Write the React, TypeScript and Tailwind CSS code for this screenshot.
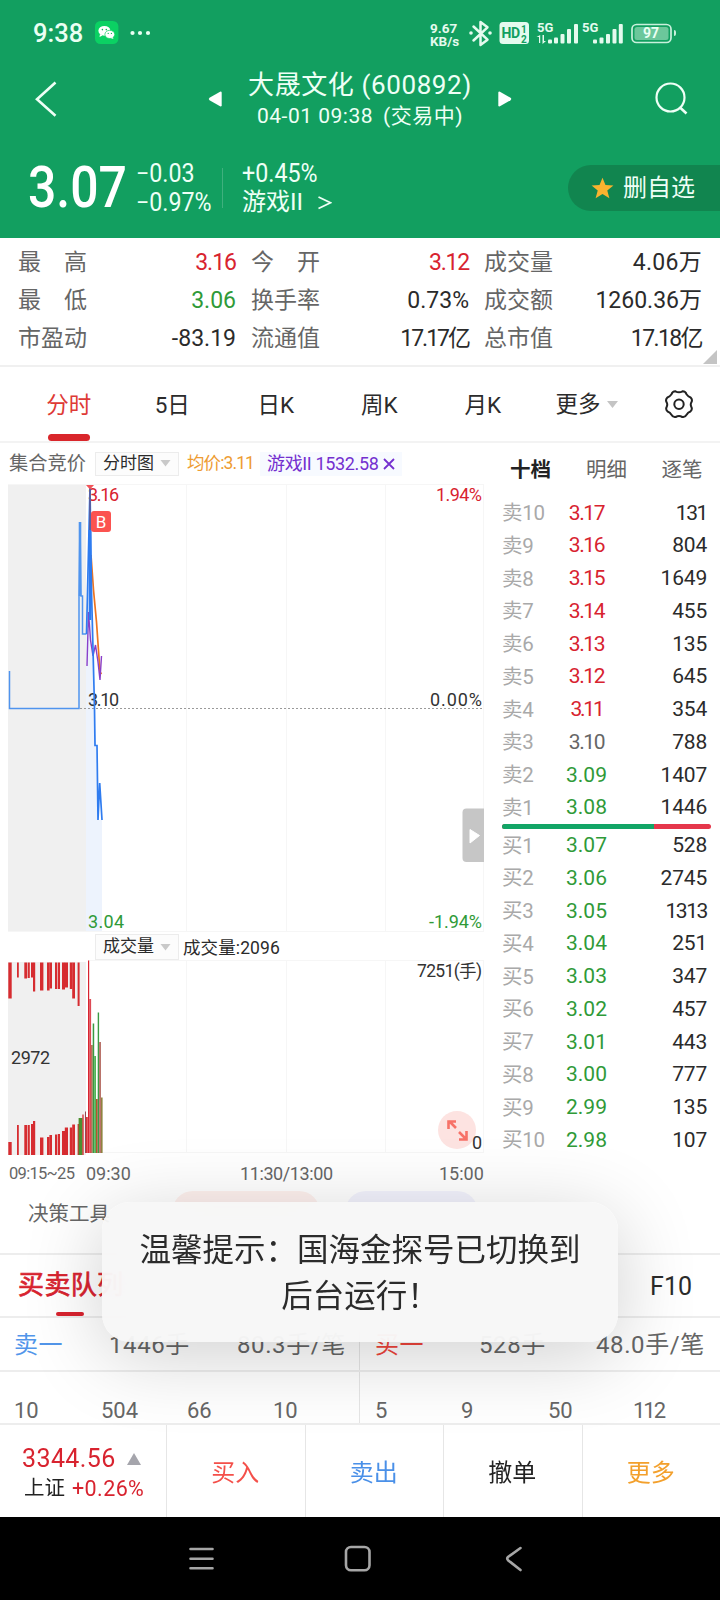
import React from 'react';
import clsx from 'clsx';

const red = 'text-[#d8232f]';
const green = 'text-[#2f9a38]';
const dark = 'text-[#2b2b2b]';

const stats = [
  [
    { label: '最　高', value: '3.16', color: `${red} tracking-[-1px]` },
    { label: '今　开', value: '3.12', color: `${red} tracking-[-1.2px]` },
    { label: '成交量', value: '4.06万', color: `${dark} tracking-[0.3px]` },
  ],
  [
    { label: '最　低', value: '3.06', color: green },
    { label: '换手率', value: '0.73%', color: dark },
    { label: '成交额', value: '1260.36万', color: dark },
  ],
  [
    { label: '市盈动', value: '-83.19', color: dark },
    { label: '流通值', value: '17.17亿', color: `${dark} tracking-[-2px]` },
    { label: '总市值', value: '17.18亿', color: `${dark} tracking-[-1.6px]` },
  ],
];

const periods = ['分时', '5日', '日K', '周K', '月K'];

const asks = [
  ['卖10', '3.17', '131'],
  ['卖9', '3.16', '804'],
  ['卖8', '3.15', '1649'],
  ['卖7', '3.14', '455'],
  ['卖6', '3.13', '135'],
  ['卖5', '3.12', '645'],
  ['卖4', '3.11', '354'],
  ['卖3', '3.10', '788'],
  ['卖2', '3.09', '1407'],
  ['卖1', '3.08', '1446'],
];

const bids = [
  ['买1', '3.07', '528'],
  ['买2', '3.06', '2745'],
  ['买3', '3.05', '1313'],
  ['买4', '3.04', '251'],
  ['买5', '3.03', '347'],
  ['买6', '3.02', '457'],
  ['买7', '3.01', '443'],
  ['买8', '3.00', '777'],
  ['买9', '2.99', '135'],
  ['买10', '2.98', '107'],
];

// auction bars: x, width, depth of the upper bar, height of the lower bar
const auctionBars = [
  [8.3, 3.4, 36, 13],
  [17, 1.8, 15, 30],
  [24.3, 2.7, 16, 30],
  [27.6, 2.2, 15.5, 30],
  [31, 2.2, 15, 31],
  [33, 2.2, 29, 34],
  [40, 3.4, 28, 17.5],
  [47, 2.6, 28, 18],
  [49.4, 2.6, 26, 20],
  [55, 2.2, 26.5, 20.5],
  [57.8, 2.2, 26.5, 21],
  [62, 3, 27, 24],
  [64.8, 3.2, 25, 27.5],
  [69.8, 2.5, 26.5, 27.5],
  [72.2, 2.8, 36, 30.5],
  [77.6, 2, 43.5, 31],
];

// minute bars: x, width, top, colour
const minuteBars: [number, number, number, string][] = [
  [78.6, 4, 1118, '#4a8f2f'],
  [82.3, 1.4, 1114.5, '#d8353a'],
  [85, 0.9, 1111.5, '#8d3440'],
  [86, 1.8, 1117, '#d8353a'],
  [88, 1.2, 960.5, '#d8232f'],
  [89.2, 1.9, 999, '#dd4a55'],
  [91.1, 1.6, 1045, '#b0694b'],
  [92.7, 1.5, 1023.5, '#3a9a42'],
  [94.2, 1.8, 1056, '#53b457'],
  [96, 1.7, 1099, '#b5512f'],
  [97.7, 1.4, 1012.5, '#3a9a42'],
  [99.1, 1.9, 1042, '#b9736a'],
  [101, 1.6, 1097.5, '#8f8340'],
];

const priceColor = (price: string) => {
  if (price === '3.10') return 'text-[#666]';
  return Number(price) > 3.1 ? red : green;
};

const StatusBar: React.FC = () => (
  <div className="flex h-[66px] items-center pl-[33px]">
    <span className="w-[62px] text-[25.5px] font-medium text-[#eafff3]">9:38</span>
    <svg width="24" height="24" viewBox="0 0 24 24">
      <rect width="23.4" height="23" rx="5.5" fill="#0bd163" />
      <ellipse cx="9.4" cy="9.8" rx="6" ry="4.9" fill="#fff" />
      <path d="M5 13l-.5 3 3-1.6z" fill="#fff" />
      <ellipse cx="14.8" cy="13.4" rx="4.9" ry="4.1" fill="#fff" stroke="#0bd163" strokeWidth=".7" />
      <path d="M17.5 16l1 2-2.8-.9z" fill="#fff" />
      <g fill="#0bb556">
        <circle cx="7.4" cy="8.6" r=".8" />
        <circle cx="11.3" cy="8.6" r=".8" />
        <circle cx="13.2" cy="12.4" r=".6" />
        <circle cx="16.4" cy="12.4" r=".6" />
      </g>
    </svg>
    <svg className="ml-[11px]" width="22" height="6" viewBox="0 0 22 6" fill="#eafff3">
      <circle cx="2.5" cy="3" r="2.1" />
      <circle cx="10" cy="3" r="2.1" />
      <circle cx="18" cy="3" r="2.1" />
    </svg>
    <div className="ml-[278px] w-[38px] pt-[3px] text-[13.5px] leading-[13px] font-bold whitespace-nowrap text-[#e4faee]">
      <div>9.67</div>
      <div>KB/s</div>
    </div>
    <svg className="-ml-[1px]" width="205" height="28" viewBox="466 19 205 28" fill="none">
      <g stroke="#e4faee" strokeWidth="2.5" strokeLinejoin="round" strokeLinecap="round">
        <path d="M472.5 26.5l14 13.200-7 5.300v-23l7 5.300-14 13.200" />
      </g>
      <circle cx="470" cy="33" r="1.8" fill="#e4faee" />
      <circle cx="489" cy="33" r="1.8" fill="#e4faee" />
      <rect x="498.5" y="22" width="29.5" height="22" rx="3.5" fill="#e4faee" />
      <g fontFamily="Roboto, sans-serif" fontWeight="700">
        <text x="500.5" y="38.2" fontSize="14" fill="#129f60" textLength="18.5">HD</text>
        <text x="520" y="32.5" fontSize="10" fill="#129f60">1</text>
        <text x="520" y="42.5" fontSize="10" fill="#129f60">2</text>
        <text x="536" y="32" fontSize="13" fill="#e4faee">5G</text>
        <text x="581" y="32" fontSize="13" fill="#e4faee">5G</text>
      </g>
      <g fill="#e4faee">
        <path d="M538 43v-6h-2.500l3.700-2v8zM541.500 35h1.500v6h2l-3.500 3z" />
        <rect x="547" y="39.5" width="4" height="4" rx="1" />
        <rect x="553" y="37.5" width="4" height="6" rx="1" />
        <rect x="559.5" y="34" width="4" height="9.500" rx="1" />
        <rect x="566" y="29" width="4" height="14.500" rx="1" />
        <rect x="573" y="24" width="4" height="19.500" rx="1" />
        <rect x="592" y="39.5" width="4" height="4" rx="1" />
        <rect x="598.5" y="37.5" width="4" height="6" rx="1" />
        <rect x="605" y="34" width="4" height="9.500" rx="1" />
        <rect x="611.5" y="29" width="4" height="14.500" rx="1" />
        <rect x="617.8" y="24" width="4" height="19.500" rx="1" />
      </g>
      <rect x="631" y="24.5" width="39" height="18" rx="4.500" stroke="#c9f0dc" strokeWidth="1.700" />
      <rect x="633.5" y="27" width="34" height="13" rx="2.500" fill="#6cc79b" />
      <text x="650" y="38.2" textAnchor="middle" fontFamily="Roboto, sans-serif" fontWeight="700" fontSize="14" fill="#eafff3">97</text>
    </svg>
    <span className="ml-[1.5px] h-1.5 w-[2.5px] rounded-r bg-[#c9f0dc]" />
  </div>
);

const Header: React.FC = () => (
  <header className="h-[238px] bg-[#129f60] text-[#eefff6]">
    <StatusBar />
    <div className="flex h-[66px] items-center">
      <svg className="ml-[34px]" width="24" height="36" viewBox="0 0 24 36" fill="none" stroke="#eefff6" strokeWidth="2.600">
        <path d="M21.500 1.500L3 18.200l18.500 16.500" />
      </svg>
      <svg className="ml-[150px]" width="14" height="16" viewBox="0 0 14 16" fill="#fff">
        <path d="M12.500.5L1.500 6.800q-1.500 1.200 0 2.400l11 6.300q1.200 0 1.200-1.200V1.700Q13.700.5 12.500.5z" />
      </svg>
      <div className="w-[276px] text-center">
        <div className="mt-[1px] text-[26px] leading-[32px] tracking-[0.6px]">大晟文化 (600892)</div>
        <div className="flex justify-center gap-[10px] text-[21px] leading-[30px] tracking-[0.5px]">
          <span>04-01 09:38</span>
          <span>(交易中)</span>
        </div>
      </div>
      <svg width="14" height="16" viewBox="0 0 14 16" fill="#fff">
        <path d="M1.500.5l11 6.300q1.500 1.200 0 2.400l-11 6.300Q.3 15.500.3 14.300V1.700Q.3.5 1.500.5z" />
      </svg>
      <svg className="ml-[142px]" width="36" height="36" viewBox="0 0 36 36" fill="none" stroke="#eefff6" strokeWidth="2.200">
        <circle cx="16.500" cy="16.500" r="14" />
        <path d="M26 26.500l6.500 6" strokeWidth="2.600" />
      </svg>
    </div>
    <div className="flex h-[106px]">
      <div className="w-[136px] pt-[30px] pl-[28px]">
        <span className="inline-block origin-left scale-x-[0.86] text-[58px] leading-[51px] font-medium text-white">3.07</span>
      </div>
      <div className="w-[86px] pt-[27px]">
        <div className="w-[68px] origin-left scale-x-[0.93] text-[25px] leading-[29px] whitespace-nowrap">−0.03</div>
        <div className="w-[82px] origin-left scale-x-[0.93] text-[25px] leading-[29px] whitespace-nowrap">−0.97%</div>
      </div>
      <div className="mt-[36px] h-[40px] w-px bg-[#3fb07e]" />
      <div className="w-[345px] pt-[27px] pl-[19px]">
        <div className="origin-left scale-x-[0.93] text-[25px] leading-[29px]">+0.45%</div>
        <div className="flex text-[24px] leading-[29px]">
          <span>游戏II</span>
          <svg className="mt-[8px] ml-[15px]" width="14" height="14" viewBox="0 0 14 14" fill="none" stroke="#eefff6" strokeWidth="1.800">
            <path d="M.5 1l12 5.800L.5 12.500" />
          </svg>
        </div>
      </div>
      <div className="mt-[33px] flex h-[46px] flex-1 items-center rounded-l-full bg-[#11854f] pl-[23px]">
        <svg width="23" height="22" viewBox="0 0 24 23">
          <path d="M12 .8l3.100 7.600 8.300.5-6.400 5.200 2.200 8L12 17.700l-7.200 4.400 2.200-8L.6 8.900l8.300-.5z" fill="#f9b32f" />
        </svg>
        <span className="ml-[9px] text-[24px]">删自选</span>
      </div>
    </div>
  </header>
);

const StatsGrid: React.FC = () => (
  <section className="relative h-[129px] border-b-2 border-[#f0f0f0] pt-[6px] pl-[18px]">
    {stats.map((row, i) => (
      <div key={i} className="flex h-[38px] items-center text-[23px] text-[#666]">
        {row.map((cell) => (
          <div key={cell.label} className="mr-[15px] flex w-[218px] justify-between">
            <span>{cell.label}</span>
            <span className={cell.color}>{cell.value}</span>
          </div>
        ))}
      </div>
    ))}
    <svg className="absolute right-[3px] bottom-[1px]" width="14" height="14" viewBox="0 0 13 13">
      <path d="M13 0v13H0z" fill="#c4c4c4" />
    </svg>
  </section>
);

const PeriodTabs: React.FC = () => (
  <nav className="flex h-[76px] items-stretch border-b-2 border-[#f3f3f3] pl-[17px] text-[22.5px] text-[#2b2b2b]">
    {periods.map((name, i) => (
      <div key={name} className={clsx('flex w-[103.5px] flex-col items-center', i === 0 && 'text-[#de3a36]')}>
        <span className="mt-[18px] leading-[40px]">{name}</span>
        {i === 0 && <span className="mt-[9px] h-[7px] w-[42px] rounded-full bg-[#d9262b]" />}
      </div>
    ))}
    <div className="ml-[21px] flex h-[75px] items-center">
      更多
      <svg className="ml-[6px]" width="11" height="8" viewBox="0 0 11 8">
        <path d="M0 0h11L5.500 7z" fill="#c4c4c4" />
      </svg>
    </div>
    <svg className="mt-[22px] ml-[46px]" width="30" height="30" viewBox="0 0 30 30" fill="none" stroke="#222" strokeWidth="2">
      <path d="M11.500 2.300Q15 4.300 18.500 2.300Q21.500 2.200 22.500 5.300Q24 7.500 26.600 8.500Q29 11 27.200 13.600Q26.300 15.500 27.200 17.500Q28.800 20.500 26.400 22.500Q23.800 23.300 22.600 25.700Q21.300 28.600 18.300 28Q15 26.200 11.700 28Q8.700 28.600 7.400 25.700Q6.200 23.300 3.600 22.500Q1.200 20.500 2.800 17.500Q3.700 15.500 2.800 13.600Q1 11 3.400 8.500Q6 7.500 7.500 5.300Q8.500 2.200 11.500 2.300z" />
      <circle cx="15" cy="15.200" r="4.700" />
    </svg>
  </nav>
);

const Dropdown: React.FC<{ label: string }> = ({ label }) => (
  <div className="flex h-full w-[84px] items-center border border-[#ececec] bg-[#fcfcfc] pl-[7px] text-[17px] text-[#2b2b2b]">
    {label}
    <svg className="ml-[6px]" width="11" height="7" viewBox="0 0 10 7">
      <path d="M0 0h10L5 6.500z" fill="#c9c9c9" />
    </svg>
  </div>
);

const PriceChart: React.FC = () => (
  <svg className="block" width="484" height="448" viewBox="0 484 484 448" fill="none">
    <rect x="8" y="484" width="78" height="448" fill="#f0f0f0" />
    <path d="M86 634L90 500L94 708L96 745L98 820H102V932H86z" fill="#edf3fd" />
    <g stroke="#f6f6f6">
      <path d="M8 484.500H484M8 931.500H484M186.500 484V932M286.500 484V932M385.500 484V932M483.500 484V932" />
    </g>
    <path d="M80 708.500H484" stroke="#9a9a9a" strokeDasharray="2 2" />
    <g fontFamily="Roboto, 'Noto Sans CJK SC', sans-serif" fontSize="18">
      <text x="88" y="501" fill="#d8232f" textLength="31">3.16</text>
      <text x="88" y="706" fill="#333" textLength="31">3.10</text>
      <text x="88" y="928" fill="#2f9a38" textLength="36">3.04</text>
      <text x="482" y="501" textAnchor="end" fill="#d8232f" textLength="46">1.94%</text>
      <text x="482" y="706" textAnchor="end" fill="#333" textLength="52">0.00%</text>
      <text x="482" y="928" textAnchor="end" fill="#2f9a38" textLength="53">-1.94%</text>
    </g>
    <path d="M91 555L93.500 590L96.500 622L100 672L101.500 674" stroke="#ee7420" strokeWidth="1.700" />
    <path d="M87 666L88.500 612L90.500 640L93 656L95.500 645L98 662L100 680L101.500 656" stroke="#8a3fc8" strokeWidth="1.400" />
    <path d="M9.500 671V708.500H79V596L80 522L81 596H82.500V634H86.500" stroke="#4f94ee" strokeWidth="1.500" />
    <path d="M80 522V596" stroke="#4f94ee" strokeWidth="2.600" />
    <path d="M86.500 634L90 487L91.500 590L94.500 708L95 745.500H97L98 820L99.700 783L102 820" stroke="#2f7cf0" strokeWidth="1.700" />
    <path d="M90 487V560" stroke="#5b5e9c" strokeWidth="1.800" />
    <path d="M90 530V620" stroke="#2f7cf0" strokeWidth="2.600" />
    <path d="M86 485H94L90 489.500z" fill="#f2555a" />
    <rect x="91" y="511" width="20" height="21" rx="3" fill="#fb5350" />
    <text x="101" y="527.500" textAnchor="middle" fontFamily="Roboto, sans-serif" fontSize="17" fill="#fff">B</text>
    <path d="M484 808.500H466.500q-4 0-4 4V858q0 4 4 4H484z" fill="#c6c6c6" />
    <path d="M470 829.500l9.500 6-9.500 7.500z" fill="#fff" stroke="#fff" strokeLinejoin="round" />
  </svg>
);

const VolumeChart: React.FC = () => (
  <svg className="block" width="484" height="196" viewBox="0 960 484 196" fill="none">
    <rect x="8" y="962" width="78" height="193" fill="#f0f0f0" />
    <path d="M88 960.500H484M88 1152.500H484M186.500 960V1152M286.500 960V1152M385.500 960V1152M483.500 960V1152" stroke="#f6f6f6" />
    {auctionBars.map(([x, w, up, low]) => (
      <g key={x} fill="#d62c30">
        <rect x={x} y={962.5} width={w} height={up} />
        <rect x={x} y={1155 - low} width={w} height={low} />
      </g>
    ))}
    {minuteBars.map(([x, w, top, fill]) => (
      <rect key={x} x={x} y={top} width={w} height={(x < 85 ? 1155 : 1153) - top} fill={fill} />
    ))}
    <circle cx="457" cy="1130" r="19" fill="#fde3e1" />
    <g stroke="#f77268" strokeWidth="2.600">
      <path d="M456 1128l-7-7M448.500 1129v-7.500h7.500M459 1132l7 7M466.500 1131v8.500H459" />
    </g>
    <g fontFamily="Roboto, 'Noto Sans CJK SC', sans-serif" fontSize="18" fill="#333">
      <text x="11" y="1063.500" textLength="39">2972</text>
      <text x="482" y="977" textAnchor="end" fontSize="17.500" textLength="65">7251(手)</text>
      <text x="482" y="1148.500" textAnchor="end">0</text>
    </g>
  </svg>
);

const OrderRow: React.FC<{ row: string[] }> = ({ row: [label, price, volume] }) => (
  <div className="flex h-[32.75px] items-center pt-[2px] text-[21px]">
    <span className="w-[50px] text-[20.5px] tracking-[-0.3px] text-[#a9a9a9]">{label}</span>
    <span className={clsx('w-[69px] text-center', priceColor(price), price === '3.11' ? 'tracking-[-2.2px]' : price.startsWith('3.1') && 'tracking-[-1.4px]')}>
      {price}
    </span>
    <span className={clsx('flex-1 text-right text-[#2b2b2b]', /1.*1/.test(volume) ? 'tracking-[-1.4px]' : 'tracking-[-0.2px]')}>{volume}</span>
  </div>
);

const OrderBook: React.FC = () => (
  <aside className="w-[218px] pr-[13px]">
    <div className="flex h-[53px] items-center pt-[2px] pl-[8px] text-[20.5px] text-[#666]">
      <span className="w-[76px] font-bold text-[#222]">十档</span>
      <span className="w-[75.5px]">明细</span>
      <span>逐笔</span>
    </div>
    {asks.map((row) => (
      <OrderRow key={row[0]} row={row} />
    ))}
    <div className="-mr-1 flex h-[5px] overflow-hidden rounded-full bg-[#e5374b]">
      <span className="w-[152px] bg-[#12a566]" />
    </div>
    {bids.map((row) => (
      <OrderRow key={row[0]} row={row} />
    ))}
  </aside>
);

const ChartPanel: React.FC = () => (
  <section className="flex h-[748px]">
    <div className="w-[502px]">
      <div className="flex h-[41px] items-center pl-[9px] text-[17.5px]">
        <span className="w-[86px] pt-[1px] text-[19.3px] text-[#666]">集合竞价</span>
        <div className="h-[24px]">
          <Dropdown label="分时图" />
        </div>
        <span className="ml-[8px] w-[73px] tracking-[-0.9px] text-[#ee9c33]">均价:3.11</span>
        <span className="flex h-[24px] items-center bg-[#f7faff] px-[7px] text-[#7430cf]">
          <span className="text-[18px] tracking-[-0.35px]">游戏II 1532.58</span>
          <svg className="ml-[4px]" width="12" height="12" viewBox="0 0 12 12" stroke="#7430cf" strokeWidth="1.800">
            <path d="M1 1l10 10M11 1L1 11" />
          </svg>
        </span>
      </div>
      <PriceChart />
      <div className="flex h-[28px] items-center pl-[95px]">
        <div className="h-[28px] pt-[2px]">
          <Dropdown label="成交量" />
        </div>
        <span className="mt-[4px] ml-[4px] text-[17.5px] tracking-[0.1px] text-[#2b2b2b]">成交量:2096</span>
      </div>
      <VolumeChart />
      <div className="flex h-[35px] items-center pl-[9px] text-[18px] text-[#666]">
        <span className="w-[77px] pt-[1px] text-[16.5px] tracking-[-0.7px]">09:15~25</span>
        <span className="w-[154px]">09:30</span>
        <span className="w-[199px] tracking-[-0.4px]">11:30/13:00</span>
        <span>15:00</span>
      </div>
    </div>
    <OrderBook />
  </section>
);

const BottomPanels: React.FC = () => (
  <>
    <div className="flex h-[64px] items-start border-b-2 border-[#ededed] pl-[28px] text-[20.5px] text-[#666]">
      <span className="mt-[9px] w-[144px] leading-[28px]">决策工具</span>
      <span className="h-[42px] w-[148px] rounded-full bg-[#fef1ee]" />
      <span className="ml-[25px] h-[42px] w-[133px] rounded-full bg-[#f3f3fd]" />
    </div>
    <div className="flex h-[63px] justify-between border-b-2 border-[#ededed] pr-[28px] pl-[18px]">
      <div className="flex flex-col items-center">
        <span className="mt-[10px] text-[26px] leading-[40px] tracking-[0.4px] text-[#d8232f] [-webkit-text-stroke:0.7px]">买卖队列</span>
        <span className="mt-[7px] mr-[2px] h-[5px] w-[28px] rounded-full bg-[#d8232f]" />
      </div>
      <span className="mt-[12px] text-[25px] leading-[40px] text-[#2b2b2b]">F10</span>
    </div>
    <div className="flex h-[54px] items-center border-b-2 border-[#ededed] text-[24px] tracking-[0.6px] text-[#666]">
      <div className="flex h-full w-[360px] items-center border-r border-[#e6e6e6] pt-[1px] pl-[14px]">
        <span className="w-[95px] text-[#5296ea]">卖一</span>
        <span className="w-[128px]">1446手</span>
        <span>80.3手/笔</span>
      </div>
      <div className="flex h-full flex-1 items-center pt-[1px] pl-[15px] whitespace-nowrap">
        <span className="w-[104px] text-[#f0453c]">买一</span>
        <span className="w-[117px]">528手</span>
        <span>48.0手/笔</span>
      </div>
    </div>
    <div className="flex h-[53px] border-b-2 border-[#ededed] text-[22px] text-[#666]">
      <div className="flex w-[360px] border-r border-[#e6e6e6] pt-[25px] pl-[14px] leading-[28px]">
        <span className="w-[87px]">10</span>
        <span className="w-[86px]">504</span>
        <span className="w-[86px]">66</span>
        <span>10</span>
      </div>
      <div className="flex pt-[25px] pl-[15px] leading-[28px]">
        <span className="w-[86px]">5</span>
        <span className="w-[87px]">9</span>
        <span className="w-[85px]">50</span>
        <span className="tracking-[-2px]">112</span>
      </div>
    </div>
  </>
);

const actions = [
  { label: '买入', color: 'text-[#f4504a]' },
  { label: '卖出', color: 'text-[#4a90e8]' },
  { label: '撤单', color: 'text-[#222]' },
  { label: '更多', color: 'text-[#f3a02c]' },
];

const ActionBar: React.FC = () => (
  <footer className="relative z-10 flex h-[92px]">
    <div className="w-[166px] pt-[18px] pl-[22px]">
      <div className="flex items-center text-[25px] leading-[31px] text-[#d8232f]">
        <span className="w-[105px] tracking-[0.4px]">3344.56</span>
        <svg width="14" height="12" viewBox="0 0 14 12">
          <path d="M7 0l7 12H0z" fill="#a5a5ac" />
        </svg>
      </div>
      <div className="flex gap-[7px] pl-[2px] text-[20.5px] leading-[29px] text-[#222]">
        上证<span className="text-[21.5px] tracking-[0.4px] text-[#d8232f]">+0.26%</span>
      </div>
    </div>
    {actions.map((a) => (
      <div key={a.label} className={clsx('flex flex-1 items-center justify-center border-l border-[#e6e6e6] pt-[4px] pr-[1px] text-[24px]', a.color)}>
        {a.label}
      </div>
    ))}
  </footer>
);

const NavBar: React.FC = () => (
  <div className="relative z-10 flex h-[83px] items-center bg-black">
    <svg width="720" height="83" viewBox="0 1517 720 83" fill="none" stroke="#a6a6a6" strokeWidth="2.600" strokeLinecap="round">
      <path d="M190.500 1549H212.500M190.500 1558.700H212.500M190.500 1568.300H212.500" />
      <rect x="346" y="1547" width="23.500" height="23.200" rx="5" />
      <path d="M520.500 1548L508 1557Q506.500 1558.600 508 1560.200L520.500 1570" />
    </svg>
  </div>
);

const Toast: React.FC = () => (
  <div className="absolute top-[1202px] left-[102px] h-[140px] w-[516px] rounded-[28px] bg-[#f6f6f6]/93 pt-[26px] text-center text-[31.5px] leading-[46px] text-[#2b2b2b] shadow-[0_14px_80px_rgba(0,0,0,0.19)] backdrop-blur-xl">
    <div>温馨提示：国海金探号已切换到</div>
    <div>后台运行！</div>
  </div>
);

const App: React.FC = () => (
  <div className="relative h-[1600px] w-[720px] overflow-hidden bg-white font-['Roboto','Noto_Sans_CJK_SC',sans-serif]">
    <Header />
    <StatsGrid />
    <PeriodTabs />
    <ChartPanel />
    <BottomPanels />
    <ActionBar />
    <NavBar />
    <Toast />
  </div>
);

export default App;
